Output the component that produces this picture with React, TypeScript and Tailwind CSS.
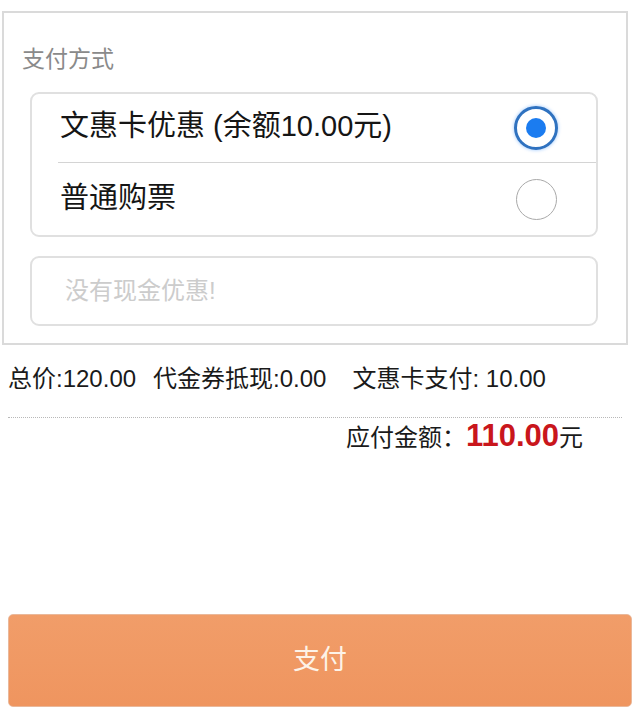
import React from "react";

const CJK = "font-['Liberation_Sans','Noto_Sans_CJK_SC',sans-serif]";

function Radio({ checked }: { checked: boolean }) {
  if (checked) {
    return (
      <span className="flex h-[44px] w-[44px] shrink-0 items-center justify-center rounded-full border-[3px] border-[#2f72c0] shadow-[0_0_3px_1px_rgba(120,180,255,0.45)]">
        <span className="h-[20px] w-[20px] rounded-full bg-[#1b7cf0]" />
      </span>
    );
  }
  return <span className="h-[41px] w-[41px] shrink-0 rounded-full border-[1.5px] border-[#a9a9a9]" />;
}

export default function App() {
  return (
    <div className={`relative h-[718px] w-[640px] overflow-hidden bg-white ${CJK}`}>
      {/* Panel de forma de pago */}
      <div className="ml-[2px] mt-[11px] h-[334px] w-[626px] border-2 border-[#dadada] bg-white">
        <div className="pl-[18px] pt-[33px] text-[23px] leading-[26px] text-[#8a8a8a]">支付方式</div>

        <div className="ml-[26px] mt-[20px] w-[568px] rounded-[9px] border-2 border-[#e0e0e0]">
          <div className="flex h-[68px] items-center justify-between pl-[28px] pr-[38px]">
            <span className="-mt-[3px] text-[29px] leading-none text-[#151515]">
              文惠卡优惠 (余额10.00元)
            </span>
            <Radio checked />
          </div>
          <div className="ml-[26px] h-px bg-[#d4d4d4]" />
          <div className="flex h-[72px] items-center justify-between pl-[28px] pr-[39px]">
            <span className="-mt-[2px] text-[29px] leading-none text-[#151515]">普通购票</span>
            <Radio checked={false} />
          </div>
        </div>

        <div className="ml-[26px] mt-[19px] flex h-[70px] w-[568px] items-center rounded-[9px] border-2 border-[#e0e0e0] pl-[33px]">
          <span className="text-[24px] text-[#cccccc]">没有现金优惠!</span>
        </div>
      </div>

      {/* Resumen */}
      <div className="flex h-[44px] items-center whitespace-pre pl-[8px] pt-[24px] text-[24px] leading-none text-[#1a1a1a]">
        <span>总价:120.00</span>
        <span className="ml-[17px]">代金券抵现:0.00</span>
        <span className="ml-[26px]">文惠卡支付: 10.00</span>
      </div>

      <div className="ml-[8px] mt-[28px] w-[614px] border-t border-dotted border-[#b8b8b8]" />

      <div className="mt-[2px] flex items-baseline justify-end pr-[57px] text-[24px] leading-none text-[#1a1a1a]">
        <span>应付金额：</span>
        <span className="text-[31px] font-bold text-[#c9161c]">110.00</span>
        <span>元</span>
      </div>

      {/* Botón pagar */}
      <button className="absolute left-[8px] top-[614px] flex h-[93px] w-[624px] items-center justify-center rounded-[5px] border border-[#eab89a] bg-gradient-to-b from-[#f19d69] to-[#ef955f] text-[27px] text-[#fdf3e8]">
        支付
      </button>
    </div>
  );
}
